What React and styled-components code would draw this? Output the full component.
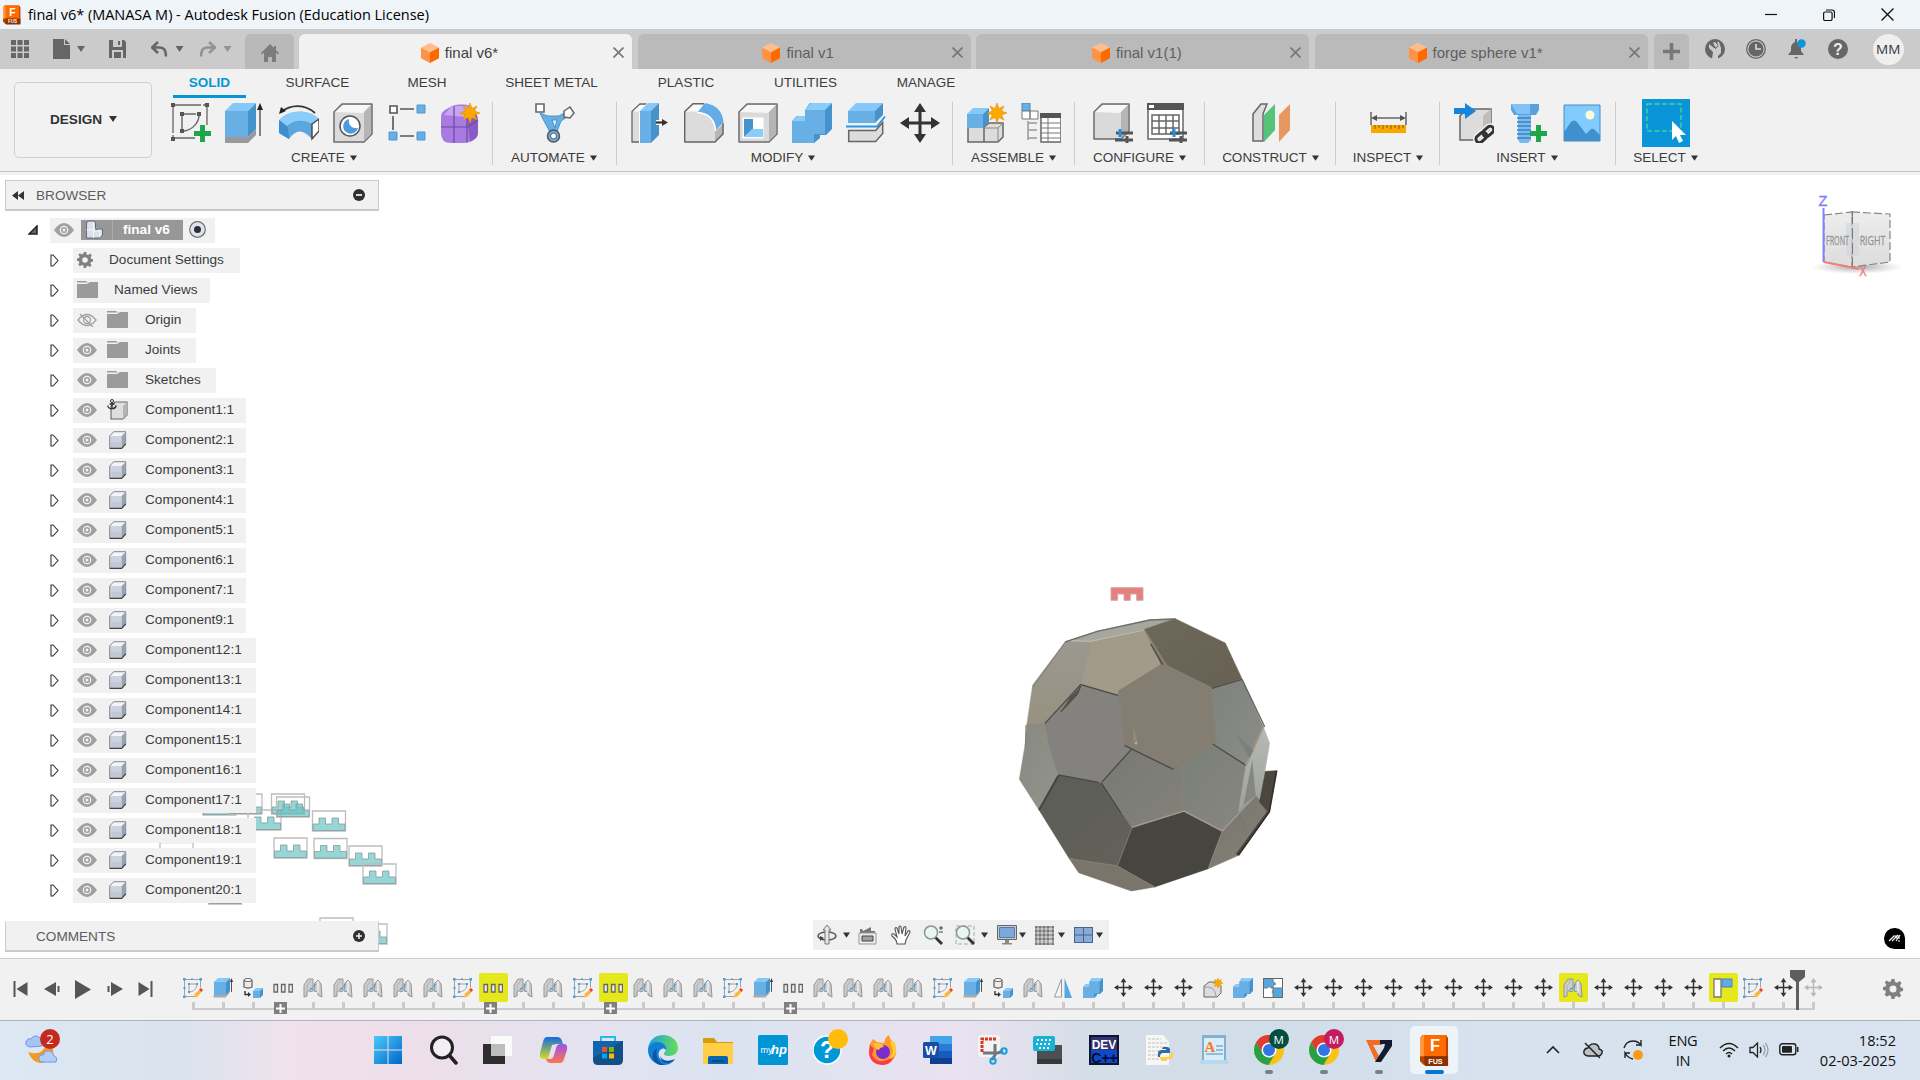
import React from "react";
import styled, { createGlobalStyle } from "styled-components";

const ui = '"Liberation Sans", Arial, sans-serif';
const win = '"Open Sans", "Noto Sans", sans-serif';

const GlobalStyle = createGlobalStyle`
  *, *::before, *::after { box-sizing: border-box; }
  body { margin: 0; overflow: hidden; background: #fff; }
  svg { display: block; flex: none; }
`;

const Screen = styled.div`
  width: 1920px; height: 1080px; display: flex; flex-direction: column;
  font-family: ${ui}; font-size: 13.6px; color: #3c3c3c; overflow: hidden; background: #fff;
`;

/* ---------- title bar ---------- */
const TitleBar = styled.header`
  height: 29px; flex: none; display: flex; align-items: center; justify-content: space-between;
  background: #eff4f9; padding: 0 26px 0 3px;
`;
const TitleLabel = styled.div`
  display: flex; align-items: center; gap: 7px; font-family: ${win};
  font-size: 14.5px; color: #000; white-space: nowrap; letter-spacing: -0.03px;
`;
const WindowButtons = styled.div`display: flex; align-items: center; gap: 46px;`;

/* ---------- document tabs ---------- */
const TabStrip = styled.div`
  height: 40px; flex: none; display: flex; align-items: flex-end; background: #cbcbcb;
`;
const QuickTools = styled.div`
  width: 245px; height: 40px; display: flex; align-items: center; padding-left: 11px;
`;
const QuickItem = styled.div`
  display: flex; align-items: center; gap: 7px; margin-right: ${p => p.$after}px; opacity: ${p => (p.$dim ? 0.55 : 1)};
`;
const HomeTab = styled.div`
  width: 49px; height: 35px; border-radius: 5px 5px 0 0; background: #b9b9b9; margin-right: 5px;
  display: flex; justify-content: center; align-items: center; padding-top: 3px;
`;
const DocTab = styled.div`
  width: 333px; height: 35px; margin-right: 5.7px; border-radius: 6px 6px 0 0; display: flex; align-items: center;
  background: ${p => (p.$active ? "#f1f1f1" : "#bababa")}; color: ${p => (p.$active ? "#3f3f3f" : "#5f5f5f")};
  font-size: 15px; padding-right: 8px; padding-top: 2px;
`;
const DocName = styled.div`
  flex: 1; display: flex; align-items: center; justify-content: center; gap: 6px; padding-left: 7px;
`;
const NewTab = styled.div`
  width: 35px; height: 35px; border-radius: 5px 5px 0 0; background: #bababa; display: flex; align-items: center; justify-content: center;
`;
const AccountTools = styled.div`
  flex: 1; height: 40px; display: flex; align-items: center; padding-left: 16px; gap: 21px;
`;
const Avatar = styled.div`
  width: 31px; height: 31px; margin-left: 4px; border-radius: 50%; background: #efefef; color: #334;
  font: 13.5px ${win}; display: flex; align-items: center; justify-content: center;
`;

/* ---------- ribbon ---------- */
const Ribbon = styled.section`
  height: 106px; flex: none; background: #f1f1f1; display: flex; position: relative;
  &::after { content: ""; position: absolute; left: 0; right: 0; top: 102px; height: 1px; background: #c4c4c4; }
`;
const Workspace = styled.button`
  width: 138px; height: 76px; margin: 13px 6px 0 14px; border: 1px solid #cfcfcf; border-radius: 5px; background: #f2f2f2;
  font: bold 13.6px ${ui}; color: #333; display: flex; align-items: center; justify-content: center; gap: 7px; padding: 0 0 2px 1px;
`;
const RibbonBody = styled.div`flex: 1; display: flex; flex-direction: column;`;
const RibbonTabs = styled.nav`height: 30px; display: flex; padding-left: 15px;`;
const RibbonTab = styled.div`
  height: 29px; width: ${p => p.$w}px; margin-right: ${p => p.$after}px; padding-top: 6px; font-size: 13.5px; white-space: nowrap;
  text-align: center; font-weight: ${p => (p.$active ? "bold" : "normal")}; color: ${p => (p.$active ? "#0696d7" : "#3c3c3c")};
  border-bottom: 3px solid ${p => (p.$active ? "#0696d7" : "transparent")};
`;
const Groups = styled.div`display: flex; height: 72px;`;
const Group = styled.div`width: ${p => p.$w}px; display: flex; flex-direction: column; align-items: center; position: relative;
  &::after { content: ""; position: absolute; right: 0; top: 3px; height: 63px; width: ${p => (p.$last ? 0 : 1)}px; background: #cdcdcd; }
`;
const GroupIcons = styled.div`height: 48px; display: flex; align-items: center; gap: 14px;`;
const GroupLabel = styled.div`
  height: 21px; display: flex; align-items: center; gap: 5px; font-size: 13.5px; white-space: nowrap; padding-right: ${p => p.$nudge || 0}px;
`;
const SelectTile = styled.div`width: 48px; height: 48px; background: #0a95d9; display: flex; align-items: center; justify-content: center;`;

/* ---------- viewport ---------- */
const Viewport = styled.main`flex: 1; min-height: 0; position: relative; background: #fff; display: flex;`;
const Markers = styled.svg`position: absolute; left: 0; top: 0;`;
const Model = styled.svg`position: absolute; left: 990px; top: 395px;`;
const ViewCube = styled.svg`position: absolute; left: 1800px; top: 15px;`;
const NavBar = styled.div`
  position: absolute; left: 813px; top: 745px; width: 296px; height: 30px; background: #f0f0f0;
  display: flex; align-items: center; padding-left: 4px;
`;
const NavItem = styled.div`width: ${p => p.$w}px; display: flex; align-items: center; gap: ${p => p.$gap || 4}px;`;
const Assistant = styled.svg`position: absolute; left: 1884px; top: 753px;`;

const Sidebar = styled.aside`
  position: relative; width: 384px; padding: 5px 5px 6px; display: flex; flex-direction: column;
`;
const PanelHead = styled.div`
  width: 374px; height: 31px; flex: none; display: flex; align-items: center; background: #f1f1f1; color: #5e5e5e;
  border: 1px solid #c9c9c9; border-bottom-width: 2px; padding: 0 13px 0 6px; font-size: 13.6px;
  border-top-color: ${p => (p.$flatTop ? "#f1f1f1" : "#c9c9c9")};
`;
const HeadIcon = styled.div`width: 24px;`;
const HeadText = styled.div`flex: 1;`;
const Tree = styled.div`display: flex; flex-direction: column; padding-top: 4px; flex: 1;`;
const TreeRow = styled.div`height: 30px; flex: none; display: flex; align-items: center; padding-left: ${p => (p.$root ? 23 : 45)}px;`;
const Arrow = styled.div`width: ${p => p.$w}px;`;
const RowBody = styled.div`
  height: 25px; width: ${p => p.$w}px; background: #f1f1f1; display: flex; align-items: center; white-space: nowrap; padding: 0 0 1px 4px;
`;
const IconCell = styled.div`width: ${p => p.$w}px; display: flex; align-items: center;`;
const RootName = styled.div`
  height: 20px; width: 102px; margin-left: 7px; margin-right: 6px; background: #979797; color: #fff; font-weight: bold; display: flex; align-items: center;
`;
const RootIcon = styled.div`width: 32px; height: 20px; padding-left: 4px; border-right: 1px solid #aaa;`;
const RootText = styled.span`padding-left: 10px;`;

/* ---------- timeline ---------- */
const Timeline = styled.section`
  height: 63px; flex: none; background: #f1f1f1; border-top: 1px solid #cfcfcf; border-bottom: 1px solid #b0b2bd;
  display: flex; position: relative;
`;
const Playback = styled.div`width: 178px; height: 62px; padding: 0 25px 2px 13px; display: flex; align-items: center; justify-content: space-between;`;
const Track = styled.div`
  display: flex; padding-top: 14px; height: 62px;
  background: linear-gradient(#cbcbcb, #cbcbcb) no-repeat 14px 49px / 1623px 2px;
`;
const Feature = styled.div`width: 30px; height: 38px; flex: none; display: flex; flex-direction: column; align-items: center;`;
const FeatureIcon = styled.div`
  width: 29px; height: 29px; flex: none; border-radius: 2px; display: flex; align-items: center; justify-content: center;
  background: ${p => (p.$hot ? "#e6e81e" : "transparent")};
  opacity: ${p => (p.$dim ? 0.3 : 1)};
`;
const Tick = styled.div`width: 3px; height: 7px; background: #cbcbcb;`;
const Expand = styled.div`
  width: 13px; height: 12px; flex: none; margin-left: -5px; background: #7f7f7f; display: flex; align-items: center; justify-content: center;
`;
const Playhead = styled.svg`position: absolute; left: 1790px; top: 11px;`;
const TimelineEnd = styled.div`flex: 1; display: flex; align-items: center; justify-content: flex-end; padding-right: 17px; height: 60px;`;

/* ---------- taskbar ---------- */
const Taskbar = styled.footer`
  height: 59px; flex: none; display: flex; align-items: center; font-family: ${win}; color: #111;
  background: linear-gradient(90deg, #dce8f4 0, #dbe3ed 180px, #f0e2ed 290px, #ecdfe9 430px, #e3e3f1 600px, #dbe3f0 730px, #eae2f0 960px, #d4dee7 1090px, #d1dde8 1260px, #d5e2ed 1440px, #dae4f1 1920px);
`;
const Weather = styled.div`width: 360px; padding-left: 24px; padding-bottom: 10px;`;
const AppIcons = styled.div`display: flex; height: 59px; align-items: center;`;
const AppSlot = styled.div`
  width: 55.08px; height: 59px; display: flex; flex-direction: column; align-items: center; padding-top: 5px;
`;
const AppTile = styled.div`
  width: 48px; height: 48px; border-radius: 5px; display: flex; flex-direction: column; align-items: center; justify-content: center; position: relative;
  background: ${p => (p.$active ? "rgba(255,255,255,.6)" : "transparent")};
`;
const Running = styled.i`
  position: absolute; bottom: 0; width: ${p => (p.$active ? 19 : 8)}px; height: 4px; border-radius: 2px;
  background: ${p => (p.$active ? "#0078d4" : "#7b7f86")};
`;
const Badge = styled.b`
  position: absolute; top: 3px; right: 4px; width: 20px; height: 20px; border-radius: 50%; color: #fff; background: ${p => p.$bg};
  font: 11.5px ${win}; display: flex; align-items: center; justify-content: center;
`;
const Tray = styled.div`flex: 1; display: flex; align-items: center; justify-content: flex-end; padding: 0 24px 2px 0; font-size: 14.6px; line-height: 20px;`;
const TrayItem = styled.div`margin-left: ${p => p.$ml}px;`;
const Language = styled.div`margin-left: 24px; width: 30px; text-align: center; letter-spacing: -0.3px;`;
const Clock = styled.div`margin-left: 18px; width: 79px; text-align: right; white-space: nowrap; letter-spacing: 0;`;

/* ---------- icons ---------- */
const Svg = ({ w = 20, h = w, vb, children }) => (
  <svg width={w} height={h} viewBox={vb || `0 0 ${w} ${h}`} fill="none">{children}</svg>
);
const Caret = ({ w = 7, h = 6, c = "#333" }) => <Svg w={w} h={h} vb="0 0 8 6"><path d="M0 0h8L4 6z" fill={c} /></Svg>;
const DocCube = () => (
  <Svg w={18} h={20}><path d="M9 0l9 4.5-9 4.7-9-4.7z" fill="#ffbd8b" /><path d="M0 4.5l9 4.7V20l-9-4.8z" fill="#ff9345" /><path d="M18 4.5L9 9.2V20l9-4.8z" fill="#ff6a00" /></Svg>
);
const Close = () => <Svg w={11}><path d="M.5.5l10 10M10.5.5l-10 10" stroke="#777" strokeWidth="1.7" /></Svg>;
const FusionLogo = ({ w = 18, h = 20 }) => (
  <Svg w={w} h={h} vb="0 0 30 32">
    <path d="M3 0h24l2 3v28H4L0 27V3z" fill="#b84300" /><path d="M0 3l3-3h24v22H0z" fill="#ff6b00" /><path d="M0 3l4-3v22H0z" fill="#ff9a43" />
    <path d="M4 22h25v10H5z" fill="#8c3100" />
    <text x="15.5" y="17" textAnchor="middle" fontFamily="Liberation Sans" fontWeight="bold" fontSize="17" fill="#fff">F</text>
    <text x="16" y="30" textAnchor="middle" fontFamily="Liberation Sans" fontWeight="bold" fontSize="7.5" fill="#fff">FUS</text>
  </Svg>
);

const Box = ({ x = 0, y = 0, w = 24, h = 30, d = 8, front = "#68afe6", top = "#85c9fb", side = "#4693cc" }) => (
  <g>
    <path d={`M${x} ${y + d}l${d} ${-d}h${w}l${-d} ${d}z`} fill={top} />
    <path d={`M${x} ${y + d}h${w}v${h}h${-w}z`} fill={front} />
    <path d={`M${x + w} ${y + d}l${d} ${-d}v${h}l${-d} ${d}z`} fill={side} />
  </g>
);
const GrayBox = ({ x = 1, y = 1, w = 30, h = 30, d = 8 }) => (
  <g strokeLinejoin="round">
    <path d={`M${x} ${y + d}l${d} ${-d}h${w}v${h}l${-d} ${d}h${-w}z`} fill="#dadada" stroke="#6c6c6c" strokeWidth="1.5" />
    <path d={`M${x + 1} ${y + d}l${d} ${-d + 1}h${w - 2}l${-d} ${d}z`} fill="#f7f7f7" />
    <path d={`M${x + w} ${y + d}l${d - 1} ${-d + 1}v${h - 1}l${-d + 1} ${d - 1}z`} fill="#b5b5b5" />
  </g>
);
const Star = ({ x, y, r = 9 }) => {
  let p = "";
  for (let i = 0; i < 16; i++) {
    const a = (i * Math.PI) / 8, q = i % 2 ? r * 0.5 : r;
    p += `${i ? "L" : "M"}${(x + q * Math.sin(a)).toFixed(2)} ${(y - q * Math.cos(a)).toFixed(2)}`;
  }
  return <path d={p + "z"} fill="#fba800" stroke="#e08a00" strokeWidth=".5" />;
};
const Plus = ({ x, y, s = 17 }) => <path d={`M${x + s / 2} ${y}v${s}M${x} ${y + s / 2}h${s}`} stroke="#1ea64b" strokeWidth={s * 0.29} />;
const MoveArrows = () => (
  <g><path d="M20 6v28M6 20h28" stroke="#333" strokeWidth="3" /><path d="M20 0l6 9H14zM20 40l6-9H14zM0 20l9-6v12zM40 20l-9-6v12z" fill="#333" /></g>
);
const Combine = () => (
  <g><path d="M13 7l5-7h22v26l-6 6H28v3l-6 5H0V18l5-5h8z" fill="#4693cc" /><path d="M13 7h20v24H22v9H0V18h13z" fill="#68afe6" /><path d="M13 7l6-7h21l-7 7zM0 18l6-5h7v5z" fill="#8accfa" /></g>
);

const R = ({ children }) => <Svg w={40} vb="0 0 40 40">{children}</Svg>;
const ribbonIcons = {
  sketch: <R><path d="M4 2h30M2 4v30M36 4v18M4 35h20" stroke="#666" strokeWidth="1.3" strokeDasharray="26 2" /><path d="M11 12v15M12 11h13M28 12c0 8-7 15-15 16" stroke="#666" strokeWidth="1.4" /><path d="M0 0h4v4H0zM34 0h4v4h-4zM0 34h4v4H0zM9 9h4v4H9zM26 9h4v4h-4zM9 26h4v4H9z" fill="#555" /><Plus x={23} y={22} s={17} /></R>,
  extrude: <R><path d="M0 34h23l8-8v6l-8 8H0z" fill="#999" /><Box x={0} y={0} w={23} h={26} /><path d="M35 5v28" stroke="#444" strokeWidth="1.3" /><path d="M35 0l3 7h-6z" fill="#222" /></R>,
  revolve: <R><path d="M2 9C12 1 26 1 36 10" stroke="#333" strokeWidth="1.8" /><path d="M0 11l2-7 5 4z" fill="#222" /><path d="M0 18C10 6 29 6 40 16L33 36C24 26 17 26 10 36L0 30z" fill="#5ca6df" /><path d="M0 17C10 6 29 6 40 16l-7 5C24 16 14 17 8 23z" fill="#8accfa" /><path d="M0 17l9 7 1 12-10-6z" fill="#3f8dcc" /><path d="M33 21l7-5v12l-7 8z" fill="#fff" stroke="#444" strokeWidth="1.4" /></R>,
  hole: <R><GrayBox /><circle cx="17" cy="23" r="10" fill="#fff" stroke="#555" strokeWidth="1.5" /><path d="M16 16a7.5 7.5 0 1 0 9 9c-6 1-10-3-9-9z" fill="#4b9be0" /></R>,
  pattern: <R><path d="M13 6h14M6 13v14M13 33h14" stroke="#555" strokeWidth="1.6" /><path d="M3 3h7v7H3z" stroke="#555" strokeWidth="1.6" fill="#fff" /><path d="M30 2h8v8h-8zM2 29h8v8H2zM30 29h8v8h-8z" fill="#68afe6" stroke="#4d98d3" /></R>,
  form: <R><path d="M0 14Q0 9 4 7l7-4q3-1.500 7-1.500h5q8 0 12 8 2 4 2 9v10q0 6-5 8l-3 2q-2 1.500-6 1.500H10Q0 40 0 30z" fill="#a77be2" /><path d="M3 12L11 3h15l6 5-8 6z" fill="#c9a4f5" /><path d="M26 14l8-6q3 6 3 12v12q-2 5-8 7z" fill="#7f4bb7" opacity=".7" /><path d="M13 3v37M0 24h27l10-7M26 14v25" stroke="#6e4a9e" strokeWidth="1.200" /><Star x={29} y={10} r={10} /></R>,
  automate: <R><path d="M5 10c8 3 7 3 10 3h9l7-4 1 5-6 4-5 13h-5L9 18z" fill="#68afe6" stroke="#4693cc" /><path d="M17 17h5l-2 8z" fill="#f1f1f1" stroke="#4693cc" /><circle cx="18.500" cy="33" r="6" fill="#68afe6" stroke="#555" strokeWidth="1.500" /><circle cx="18.500" cy="33" r="3" fill="#fff" stroke="#555" /><path d="M1 1h8v8H1z" fill="#fff" stroke="#666" strokeWidth="1.600" /><path d="M29 8l6-4 4 6-4 5-6-1z" fill="#fff" stroke="#666" strokeWidth="1.500" /></R>,
  press: <R><path d="M2 8.500l8-7.500h7l-7 8v30H2z" fill="#ddd" stroke="#666" strokeWidth="1.300" /><path d="M3 8.500l7-6.500h6l-6 6.500z" fill="#fafafa" /><path d="M9 9v31l1 0V8l9-8h-2z" fill="#fff" /><Box x={10} y={0} w={11} h={32} d={8} /><path d="M26 19.500h8" stroke="#fff" strokeWidth="5" /><path d="M26 19.500h8" stroke="#333" strokeWidth="2.200" /><path d="M32 16l6 3.500-6 3.500z" fill="#333" /></R>,
  fillet: <R><path d="M.7 8.500L9 1h11l-5 8q15 1 16 17l8-6v11l-8 8.500H.7z" fill="#dcdcdc" /><path d="M2 8.500l8-7h9l-5 7z" fill="#fafafa" /><path d="M31 29l8-8v10l-8 8z" fill="#b5b5b5" /><path d="M20 .7H9L.7 8.500V39H31l8-8V20" stroke="#666" strokeWidth="1.500" strokeLinejoin="round" /><path d="M14 9L21 0q17 3 18.500 19L32 27Q30 11 14 9z" fill="#63ace6" /><path d="M13 9.500q17 1 18.500 18" stroke="#fff" strokeWidth="1.600" /></R>,
  shell: <R><GrayBox /><path d="M4.500 14.500h21v21h-21z" fill="#fff" /><path d="M6 16h9v11l-9 7z" fill="#4693cc" /><path d="M14 26h11v8H6z" fill="#8accfa" /></R>,
  combine: <R><Combine /></R>,
  split: <R><Box x={2} y={0} w={27} h={12} d={8} /><path d="M0 23.500h31l8-10" stroke="#2795e6" strokeWidth="1.800" /><path d="M2.700 27.500h27l7-8v11l-7 8h-27z" fill="#dcdcdc" stroke="#666" strokeWidth="1.500" /></R>,
  move: <R><MoveArrows /></R>,
  component: <R><path d="M1 24h16v15H1zM17 24l5-4h14v14l-5 5H17z" fill="#dcdcdc" stroke="#666" strokeWidth="1.500" /><path d="M17 25h14v14M31 25l5-5" stroke="#888" /><Box x={0} y={5} w={16} h={14} d={6} /><Star x={30} y={10} r={10} /></R>,
  joints: <R><path d="M1 0h8v8H1z" fill="#68afe6" stroke="#4b88b6" /><path d="M1 8h8v8H1zM9 8h8v8H9z" fill="#fff" stroke="#777" /><path d="M7 18v19M7 20h9M7 27h9M7 35h9" stroke="#999" strokeWidth="1.500" /><path d="M20 11h20v28H20z" fill="#fff" stroke="#666" strokeWidth="1.500" /><path d="M19 10h21v5H19z" fill="#555" /><path d="M20 20h20M20 25h20M20 30h20M20 35h20M27 15v24" stroke="#777" /></R>,
  configBox: <R><GrayBox w={27} h={27} /><path d="M23 30h17M22 37h18" stroke="#555" strokeWidth="3" /><path d="M27 26v8" stroke="#1e90e8" strokeWidth="3" /><path d="M34 33v8" stroke="#555" strokeWidth="3" /></R>,
  configTable: <R><path d="M1 1h35v35H1z" fill="#fff" stroke="#666" strokeWidth="1.500" /><path d="M0 0h37v7H0z" fill="#555" /><path d="M2 2h5v3H2z" fill="#fff" /><path d="M5 12h27v19H5zM5 18h27M5 25h27M12 12v19M19 12v19M26 12v19" stroke="#666" strokeWidth="1.500" /><path d="M23 30h17M22 37h18" stroke="#555" strokeWidth="3" /><path d="M27 26v8" stroke="#1e90e8" strokeWidth="3" /><path d="M34 33v8" stroke="#555" strokeWidth="3" /></R>,
  construct: <R><path d="M2 11l8-10h6L12 11v27H2z" fill="#ddd" stroke="#666" strokeWidth="1.500" /><path d="M13 12L24 1v26L13 39z" fill="#55c47a" /><path d="M28 12L39 1v26L28 39z" fill="#e79861" /></R>,
  inspect: <R><path d="M3 9v13M38 9v13M5 15h31" stroke="#666" strokeWidth="1.500" /><path d="M3 15l6-3v6zM38 15l-6-3v6z" fill="#555" /><path d="M3 22h35v8H3z" fill="#f9a800" /><path d="M7 22v4M11 22v3M15 22v4M19 22v3M23 22v4M27 22v3M31 22v4M35 22v3" stroke="#9d6700" strokeWidth="1.200" /></R>,
  insert: <R><path d="M6 13l6-7h25v24l-7 7H6z" fill="#dcdcdc" stroke="#666" strokeWidth="1.500" /><path d="M29 13l8-7v22l-8 8z" fill="#bdbdbd" /><path d="M0 5h11V0l11 8-11 8v-5H0z" fill="#1784dc" /><g stroke="#f1f1f1" strokeWidth="6"><rect x="21" y="31" width="12" height="7" rx="3.500" transform="rotate(-42 27 34)" /><rect x="28" y="25" width="12" height="7" rx="3.500" transform="rotate(-42 34 28)" /></g><g stroke="#333" strokeWidth="3"><rect x="21" y="31" width="12" height="7" rx="3.500" transform="rotate(-42 27 34)" /><rect x="28" y="25" width="12" height="7" rx="3.500" transform="rotate(-42 34 28)" /></g></R>,
  bolt: <R><path d="M10 10h13v27l-3 3h-8l-2-3z" fill="#79baf0" /><path d="M9 15h14M9 19h14M9 23h14M9 27h14M9 31h14M9 35h14" stroke="#3d82bc" strokeWidth="1.500" /><path d="M3 1h28v6l-3 5H6L3 7z" fill="#5ba2dc" /><path d="M3 1h19v10H9z" fill="#82c1f4" /><Plus x={22} y={22} s={17} /></R>,
  picture: <R><path d="M2 2h36v36H2z" fill="#82cbff" stroke="#3d90ca" /><path d="M2 29l7-10q3-3 6 0l9 12 5-5q2-1 4 1l5 5v6H2z" fill="#3f90cc" /><circle cx="28" cy="12" r="4.500" fill="#fffbd2" /></R>,
};

/* timeline glyphs drawn on a 20px grid */
const featureIcons = {
  sketch: <Svg w={20}><path d="M1.500 1.500h16M1.500 1.500v16M17.500 1.500v8M1.500 18.500h11" stroke="#999" strokeWidth=".9" /><path d="M6 6h8c0 4-3 8-8 8z" stroke="#999" strokeWidth=".9" /><path d="M0 0h2.500v2.500H0zM8 .5h2V2H8zM16.500 0H19v2.500h-2.500zM.5 9h2v2h-2zM0 17.500h2.500V20H0zM5 5h2v2H5zM13 5h2v2h-2zM5 13h2v2H5z" fill="#45a0ea" /><path d="M11 19.500l1-4 5-4 2 2-4.500 5z" fill="#fcb73b" /><path d="M16 11.500l2-1.500 2 2-1.500 2z" fill="#e84234" /></Svg>,
  extrude: <Svg w={20}><path d="M.5 17h12l4-4v2l-4 4.500H.5z" fill="#aaa" /><Box w={12} h={13} d={4} x={1} /><path d="M18.500 3v11" stroke="#444" strokeWidth=".9" /><path d="M18.500 0l1.500 4h-3z" fill="#333" /></Svg>,
  copy: <Svg w={20}><path d="M1 2v7q4 2 8 0V2" fill="#ececec" stroke="#666" strokeWidth="1.300" /><ellipse cx="5" cy="2" rx="4" ry="1.500" fill="#fff" stroke="#666" /><path d="M2 13v3.500h4" stroke="#333" strokeWidth="1.400" /><path d="M5 14l3 2.500L5 19z" fill="#333" /><Box x={10} y={10} w={7} h={7} d={3} /></Svg>,
  dots: <Svg w={20}><path d="M1 6.500h3.500V14H1zM8.500 6.500H12V14H8.500zM16 6.500h3.500V14H16z" fill="#eee" stroke="#666" strokeWidth="1.300" /></Svg>,
  joint: <Svg w={20}><path d="M1 19V7l4-6 5 0v12l-3 1v-2l-3 2v4z" fill="#cdcdcd" stroke="#979797" /><path d="M4 18V8l4-6" stroke="#b0b0b0" /><path d="M12 5l3-3 3 4 1 13-4-2v-3l-4-1z" fill="#cdcdcd" stroke="#929292" /><path d="M15 3v12" stroke="#eee" strokeWidth="1.500" /><path d="M7 11l3-1M11 9l1-3" stroke="#4aa3e3" strokeWidth="1.800" /></Svg>,
  mirror: <Svg w={20}><path d="M8.500 1v18H1.500z" fill="#f5f5f5" stroke="#999" /><path d="M11.500 0v20H19z" fill="#54a9e5" /></Svg>,
  combine: <Svg w={20} vb="0 0 40 40"><Combine /></Svg>,
  move: <Svg w={19} vb="0 0 40 40"><MoveArrows /></Svg>,
  fillet: <Svg w={20}><path d="M1 8l5-4h8l4 4v7l-4 4H1z" fill="#ddd" stroke="#666" /><path d="M2 9q10-1 11 9" stroke="#999" /><Star x={15} y={5} r={5} /></Svg>,
  puzzle: <Svg w={20}><path d="M0 0h20v20H0z" fill="#fff" stroke="#666" strokeWidth="2" /><path d="M1 1h9v3q3 0 3 3h-3v3H7q0-3-3 0H1zM10 10h9v9h-9v-4q-3 0 0-3z" fill="#55a5df" /><path d="M10 0v4q4 1 0 4v12M0 10h4q3-3 4 0h12" stroke="#777" /></Svg>,
  align: <Svg w={20}><path d="M1 1h7v18H1z" fill="#fff" stroke="#777" strokeWidth="1.300" /><path d="M9 1h10v8H9z" fill="#63abe5" stroke="#4683b7" /></Svg>,
};
const features = [
  "sketch", "extrude", "copy", "dots+", "joint", "joint", "joint", "joint", "joint", "sketch", "dots+!", "joint", "joint", "sketch", "dots+!",
  "joint", "joint", "joint", "sketch", "extrude", "dots+", "joint", "joint", "joint", "joint", "sketch", "extrude", "copy", "joint", "mirror",
  "combine", "move", "move", "move", "fillet", "combine", "puzzle", "move", "move", "move", "move", "move", "move", "move", "move", "move",
  "joint!", "move", "move", "move", "move", "align!", "sketch", "move", "move~",
];

const ribbonTabs = [
  ["SOLID", 73, 35], ["SURFACE", 73, 45.5], ["MESH", 55, 46], ["SHEET METAL", 102, 48.5], ["PLASTIC", 70, 43.500], ["UTILITIES", 82, 40.500], ["MANAGE", 78, 0],
];
const groups = [
  ["CREATE", 335, ["sketch", "extrude", "revolve", "hole", "pattern", "form"], 3],
  ["AUTOMATE", 124, ["automate"], 2],
  ["MODIFY", 336, ["press", "fillet", "shell", "combine", "split", "move"], 4],
  ["ASSEMBLE", 122, ["component", "joints"], 1],
  ["CONFIGURE", 130, ["configBox", "configTable"], 1],
  ["CONSTRUCT", 131, ["construct"]],
  ["INSPECT", 104, ["inspect"]],
  ["INSERT", 176, ["insert", "bolt", "picture"], 2],
];

const Eye = ({ off }) => off ? (
  <Svg w={20} h={14}><path d="M1 7q9-11 18 0-9 11-18 0z" stroke="#a0a0a0" strokeWidth="1.300" /><circle cx="10" cy="7" r="3.500" stroke="#a0a0a0" strokeWidth="1.300" /><path d="M3 1l13 13" stroke="#a0a0a0" strokeWidth="1.300" /></Svg>
) : (
  <Svg w={20} h={14}><path d="M0 7q10-14 20 0-10 14-20 0z" fill="#a0a0a0" /><circle cx="10" cy="7" r="3.700" stroke="#f3f3f3" strokeWidth="1.200" /><circle cx="10" cy="7" r="1.500" fill="#f3f3f3" /></Svg>
);
const Folder = () => <Svg w={21} h={17}><path d="M0 0h9l2 1.500H0zM0 3h10l3-2h8v16H0z" fill="#9b9b9b" /></Svg>;
const gearPath = "M8.500 0h3l.5 3 2 .8L16.500 2l2 2.100L17 6.500l.8 2 2.200.5v3l-2.500.5-.8 1.800 1.500 2.200-2.100 2.100-2.300-1.500-1.900.8-.5 2.100h-3L8 17l-2-.8-2.300 1.500-2.100-2.100L3 13.300l-.6-1.800L0 11V8l2.500-.5.8-1.900L1.700 3.500l2-2L6 3l2-.8zM10 6.500a3.500 3.500 0 1 0 .01 7 3.500 3.500 0 1 0-.01-7z";
const Gear = ({ w = 16, c = "#808080" }) => <Svg w={w} vb="0 0 20 20"><path fillRule="evenodd" d={gearPath} fill={c} /></Svg>;
const Part = () => (
  <Svg w={18} h={18}><path d="M.7 5l4-4.300h12v12.300l-4 4.300h-12z" fill="#ccd2de" stroke="#85888f" strokeWidth="1" /><path d="M1.500 5l3.500-3.600h11L12.500 5z" fill="#f4f5f8" /><path d="M12.700 5l3.600-3.600V13l-3.600 3.800z" fill="#9aa2b2" /><path d="M2 11h10v5H2z" fill="#b8bfce" opacity=".5" /><path d="M.7 17.300h12l4-4.300" stroke="#444" strokeWidth="1.200" /></Svg>
);
const Anchored = () => (
  <Svg w={22} h={21}><path d="M4 7l4-4h12v13l-4 4H4z" fill="#dedede" stroke="#666" strokeWidth="1.100" /><path d="M16 7l4-4v13l-4 4z" fill="#b5b5b5" /><circle cx="5" cy="2" r="1.500" fill="#fff" stroke="#333" /><path d="M5 3v6M2.500 5h5M.8 6.500q.5 3.500 4.200 3.200 3.500.2 4.200-3.200" stroke="#333" strokeWidth="1.300" /></Svg>
);
const Assembly = () => <Svg w={19} h={19}><path d="M1.500 3l2-2h6l1 2v7l3-1h4v6l-3 3h-13z" fill="#dbe1ec" stroke="#626a78" /><path d="M1.500 10h7v8M8.500 10l2-1M8.500 3v7M9 11h6v6" stroke="#f4f6fa" /></Svg>;
const Collapsed = () => <Svg w={9} h={13}><path d="M1 1h2l5 5.500-5 5.500H1z" fill="#fff" stroke="#333" strokeWidth="1.100" /></Svg>;

const rows = [
  ["gear", "Document Settings", 167], ["folder", "Named Views", 137],
  ["origin", "Origin", 123], ["sub", "Joints", 123], ["sub", "Sketches", 143],
  ["anchor", "Component1:1", 173],
  ...[2, 3, 4, 5, 6, 7, 9, 12, 13, 14, 15, 16, 17, 18, 19, 20].map(n => ["part", `Component${n}:1`, n > 9 ? 183 : 173]),
];

function Row({ kind, label, w }) {
  const top = kind === "gear" || kind === "folder";
  return (
    <TreeRow>
      <Arrow $w={23}><Collapsed /></Arrow>
      <RowBody $w={w}>
        {top ? (
          <IconCell $w={kind === "gear" ? 32 : 37}>{kind === "gear" ? <Gear /> : <Folder />}</IconCell>
        ) : (
          <>
            <IconCell $w={kind === "anchor" ? 30 : kind === "part" ? 32 : 30}><Eye off={kind === "origin"} /></IconCell>
            <IconCell $w={kind === "anchor" ? 38 : kind === "part" ? 36 : 38}>{kind === "part" ? <Part /> : kind === "anchor" ? <Anchored /> : <Folder />}</IconCell>
          </>
        )}
        {label}
      </RowBody>
    </TreeRow>
  );
}

const markers = [[203, 620], [229, 619], [248, 635], [271.5, 619], [276.5, 622], [312.5, 636], [274, 663], [314, 663.5], [349, 671], [363, 689], [160, 667.5], [208.5, 709], [320, 743], [354, 749]];
const JointMarker = ({ x, y }) => (
  <g transform={`translate(${x} ${y})`}>
    <path d="M0 0h33v20H0z" fill="none" stroke="#bdbdbd" strokeWidth="1.300" />
    <path d="M.5 19.500V13h6V7h6.500v6h6.500V7H26v6h6.500v6.500z" fill="#66c2c2" fillOpacity=".68" stroke="#8b9a9a" strokeWidth=".8" />
  </g>
);

const faces = [
  ["225,216 322,183 480,149 556,146 463,180 302,217", "#a6a79f"],
  ["302,215 463,178 512,284 384,362 384,376 272,342", "url(#beige)"],
  ["463,178 556,146 706,219 756,326 665,354 526,284", "url(#umber)"],
  ["225,216 302,215 272,342 165,462 110,467 128,345", "url(#tan)"],
  ["110,465 165,460 206,615 147,720 88,628 106,520", "url(#leftLow)"],
  ["272,342 384,376 403,526 424,538 335,640 205,615 180,540 165,460", "#84827e"],
  ["665,354 756,326 820,470 768,586 668,522 680,514", "url(#rightUp)"],
  ["424,536 550,597 580,578 580,723 426,773 335,637", "url(#mid)"],
  ["668,520 768,586 750,720 697,785 580,723 578,578", "url(#rightHex)"],
  ["512,284 526,284 663,352 680,514 580,578 550,597 403,526 386,364", "#837d72"],
  ["205,615 325,637 335,640 426,773 382,888 238,866 147,720", "url(#slate)"],
  ["426,773 580,723 697,783 655,896 494,951 382,888", "#474540"],
  ["238,866 382,888 494,951 424,963 266,908", "#79756a"],
  ["820,470 839,520 825,602 808,690 797,676 745,725 768,586", "url(#pale)"],
  ["697,783 797,676 838,725 746,856 655,896", "url(#lowRight)"],
  ["826,604 860,602 838,725 746,856 738,852 832,724 808,695", "#4b473f"],
];
const Grad = ({ id, a, b, x2 = 1, y2 = 1 }) => <linearGradient id={id} x1="0" y1="0" x2={x2} y2={y2}><stop stopColor={a} /><stop offset="1" stopColor={b} /></linearGradient>;

const Badged = ({ children, bg, label }) => <>{children}<Badge $bg={bg}>{label}</Badge></>;
const Chrome = () => (
  <Svg w={30} vb="0 0 30 30"><circle cx="15" cy="15" r="15" fill="#fbc116" /><path d="M2 7.500A15 15 0 0 1 28 7.500L15 9 8.500 18.500z" fill="#e33b2e" /><path d="M2 7.500a15 15 0 0 0 12.500 22.400L21 19 9 18.500z" fill="#26a148" /><circle cx="15" cy="15" r="7.500" fill="#fff" /><circle cx="15" cy="15" r="6" fill="#3175e4" /></Svg>
);
const A = ({ children }) => <Svg w={30} vb="0 0 30 30">{children}</Svg>;
const t = { textAnchor: "middle", fontFamily: "Liberation Sans", fontWeight: "bold" };
const apps = [
  { el: <A><defs><Grad id="wn" a="#4cc9fa" b="#0067c8" /></defs><path d="M1 1h13.500v13.500H1zM15.500 1H29v13.500H15.500zM1 15.500h13.500V29H1zM15.500 15.500H29V29H15.500z" fill="url(#wn)" /></A> },
  { el: <A><circle cx="14" cy="12.500" r="10.500" fill="#f1eef4" stroke="#222" strokeWidth="3" /><path d="M21.500 20.500l6.500 7.500" stroke="#222" strokeWidth="3.500" strokeLinecap="round" /></A> },
  { el: <A><path d="M0 9h22v20H0z" fill="#2e2e2e" /><path d="M8 1h21v20H8z" fill="#fafafa" /><path d="M8 9h14v12H8z" fill="#bdbdbd" /></A> },
  { el: <A><defs><Grad id="cp1" a="#116be1" b="#d8db22" x2={0} /><Grad id="cp2" a="#9b53eb" b="#ff754d" x2={0} /></defs><path d="M9 2h10q4 0 5 4l1 3h-5q-3 0-4 4l-2 7q-1 4-5 4H6q-5 0-4-6l3-11q1-5 4-5z" fill="url(#cp1)" /><path d="M22 28H13q-4 0-5-4h4q3 0 4-4l2-7q1-4 5-4h3q4 0 3 6l-3 9q-1 4-4 4z" fill="url(#cp2)" /><path d="M14 10l5-1-5 13-4 2z" fill="#e7e0f5" /></A> },
  { el: <A><path d="M8 7V2h14v5" stroke="#23bcef" strokeWidth="2" /><path d="M0 6h30v19q0 5-5 5H5q-5 0-5-5z" fill="#124f87" /><path d="M0 6h30L0 23z" fill="#1263ad" /><path d="M9 12h5v5H9z" fill="#f25022" /><path d="M16 12h5v5h-5z" fill="#7fba00" /><path d="M9 18.500h5v5H9z" fill="#00a4ef" /><path d="M16 18.500h5v5h-5z" fill="#ffb900" /></A> },
  { el: <A><defs><Grad id="ed" a="#1ba0e6" b="#68dd55" y2={0} /></defs><path d="M0 15C0 6 7 0 15 0c9 0 15 6 15 13 0 5-4 8-9 8-3 0-5-1-5-2 0-2 2-2 2-5S14 8 9 9 0 15 0 15z" fill="url(#ed)" /><path d="M0 15c1-6 6-8 9-8 7 0 10 5 9 8-3-4-9 0-7 7 2 5 10 6 16 2-3 5-8 6-12 6C6 30 0 23 0 15z" fill="#117ed5" /><path d="M9 13c-2 6 0 15 8 17-3 1-6 0-9-2-6-5-3-12 1-15zM12 21c2 5 9 6 15 3-6 7-14 4-15-3z" fill="#0b55a2" /></A> },
  { el: <A><path d="M0 3h11l3 4h16v21H0z" fill="#d99a0c" /><path d="M0 8h30v19q0 2-2 2H2q-2 0-2-2z" fill="#ffcf48" /><path d="M5 29v-6q0-2 2-2h16q2 0 2 2v6z" fill="#0867b2" /><path d="M9 25h12v2H9z" fill="#084a83" /></A> },
  { el: <A><rect width="30" height="30" rx="1.500" fill="#0096d6" /><text x="8.500" y="18" {...t} fontWeight="normal" fontSize="9" fill="#fff">my</text><text x="21" y="19" {...t} fontStyle="italic" fontSize="13" fill="#fff">hp</text></A> },
  { el: <Badged bg="#ffbd0a" label=""><A><circle cx="14" cy="15" r="14" fill="#0097d9" stroke="#fff" strokeWidth="1.500" /><text x="14" y="23" {...t} fontSize="23" fill="#fff">?</text></A></Badged> },
  { el: <A><path d="M2 9L5 4l4 3 7 1q1-6 5-8 1 5 5 8 3 5 2 11-3 10-13 11Q3 29 1 18z" fill="#ff9a26" /><path d="M2 9q1 3 4 4l-2 7q4 7 11 6 9-1 11-9-1 13-12 13Q2 29 1 18z" fill="#fa3851" /><circle cx="15" cy="17" r="7" fill="#7b2bd2" /><path d="M5 8l5 0q4 0 6 4-4 0-5 3-5-1-6-7z" fill="#ffbd37" /><path d="M22 8q6 9-1 16 8-2 7-12-1-5-4-7z" fill="#ffce3a" /></A> },
  { el: <A><path d="M7 1h22v28H7z" fill="#185abd" /><path d="M7 1h22v8H7z" fill="#43a5ee" /><path d="M7 9h22v7H7z" fill="#2a7bd3" /><path d="M7 23h22v6H7z" fill="#103f91" /><rect y="7" width="16" height="16" rx="1.500" fill="#174ca7" /><text x="8" y="19.500" {...t} fontSize="12.500" fill="#fff">W</text></A> },
  { el: <A><rect width="22" height="22" rx="3" fill="#f3f3f3" /><path d="M4 17V4h14" stroke="#d7371e" strokeWidth="3" strokeDasharray="3 1" /><path d="M17 9v11l-3 5M5 18h15l5-2" stroke="#6e777f" strokeWidth="3" /><circle cx="15" cy="26" r="2.700" stroke="#179fdb" strokeWidth="2" /><circle cx="26" cy="16" r="2.700" stroke="#179fdb" strokeWidth="2" /></A> },
  { el: <A><path d="M4 10h25v19H4z" fill="#4c5053" /><path d="M4 24h25v5H4z" fill="#373a3c" /><rect y="1" width="22" height="15" rx="2" fill="#18b2d6" /><path d="M4 5h14M3 9h16M6 13h10" stroke="#fff" strokeWidth="2" strokeDasharray="2 2" /></A> },
  { el: <A><rect width="30" height="30" fill="#11142e" /><path d="M2 15h26v13H2z" fill="#0e4ac5" /><path d="M2 2h26v13H2z" fill="#333370" /><text x="15" y="13.500" {...t} fontSize="12" fill="#fff">DEV</text><text x="15.500" y="28" {...t} fontSize="14" fill="#030832">C++</text></A> },
  { el: <A><path d="M2 0h17l6 7v23H2z" fill="#f6f6f4" /><path d="M4 4h13M4 8h19M4 12h19M4 16h13M4 20h12M4 24h12" stroke="#c3c3c3" strokeDasharray="3 1" /><path d="M19 12h4q3 0 3 3v3h-7q-3 0-3 4h-2v-4q0-3 4-3h4v-1h-4z" fill="#2f6ea5" /><path d="M23 26h-4q-3 0-3-3v-1h7q4 0 4-5h2v4q0 3-3 3h-3z" fill="#ffd047" /></A> },
  { el: <A><path d="M3 0h24v24l2 4H1l2-4z" fill="#85afd0" /><path d="M5 3h20v22H5z" fill="#d9edf9" /><text x="11" y="17" {...t} fontFamily="Liberation Serif" fontSize="15" fill="#f47b20">A</text><path d="M17 11h7M17 15h7M7 19h17" stroke="#4d8ebb" /><path d="M2 25h26l2 4H0z" fill="#b7d8ef" /></A> },
  { el: <Badged bg="#034e41" label="M"><Chrome /></Badged>, run: true },
  { el: <Badged bg="#c41c62" label="M"><Chrome /></Badged>, run: true },
  { el: <A><path d="M2 5h18l-2 5H9l6 11-3 6z" fill="#f36c21" /><path d="M16 5h12v6L17 27h-6l9-14 1-4h-5z" fill="#111b31" /></A>, run: true },
  { el: <FusionLogo w={29} h={31} />, run: true, active: true },
];

const Search = ({ dashed }) => (
  <Svg w={20}>{dashed && <path d="M1 1h18v18H1z" stroke="#aaa" strokeDasharray="4 2" />}<path d="M12 12l7 7" stroke="#333" strokeWidth="2.800" /><circle cx="8" cy="7.500" r="6.500" fill="#e9f5f3" stroke="#8a9699" strokeWidth="1.500" />{!dashed && <path d="M16 3h4M18 1v4M16 7h4" stroke="#444" />}</Svg>
);

export default function App() {
  return (
    <Screen>
      <GlobalStyle />
      <TitleBar>
        <TitleLabel><FusionLogo />final v6* (MANASA M) - Autodesk Fusion (Education License)</TitleLabel>
        <WindowButtons>
          <Svg w={12}><path d="M0 5.500h12" stroke="#111" strokeWidth="1.200" /></Svg>
          <Svg w={12}><rect x=".6" y="3" width="8.500" height="8.500" rx="1.500" stroke="#111" strokeWidth="1.200" /><path d="M3 1h6q2.500 0 2.500 2.500V9" stroke="#111" strokeWidth="1.200" /></Svg>
          <Svg w={13} vb="0 0 12 12"><path d="M.5.5l11 11M11.500.5l-11 11" stroke="#111" strokeWidth="1.200" /></Svg>
        </WindowButtons>
      </TitleBar>

      <TabStrip>
        <QuickTools>
          <QuickItem $after={24}><Svg w={18}><path d="M0 0h5v5H0zM6.500 0h5v5h-5zM13 0h5v5h-5zM0 6.500h5v5H0zM6.500 6.500h5v5h-5zM13 6.500h5v5h-5zM0 13h5v5H0zM6.500 13h5v5h-5zM13 13h5v5h-5z" fill="#666" /></Svg></QuickItem>
          <QuickItem $after={24}><Svg w={17} h={20}><path d="M0 0h11v6h6v14H0z" fill="#666" /><path d="M12 0l5 5h-5z" fill="#666" /></Svg><Caret w={8} c="#666" /></QuickItem>
          <QuickItem $after={25}><Svg w={17} h={18}><path d="M0 0h15l2 2v16H0z" fill="#666" /><path d="M4 0h9v7H4zM3 10h11v8H3z" fill="#cbcbcb" /><path d="M9 1h2v4H9zM5 12h7v6H5z" fill="#666" /></Svg></QuickItem>
          <QuickItem $after={15}><Svg w={17}><path d="M7 1L1 6.500 7 12M2 6.500h7q6 0 6 9" stroke="#666" strokeWidth="2.600" /></Svg><Caret w={9} c="#666" /></QuickItem>
          <QuickItem $after={0} $dim><Svg w={17}><path d="M10 1l6 5.500-6 5.500M15 6.500H8q-6 0-6 9" stroke="#666" strokeWidth="2.600" /></Svg><Caret w={9} c="#666" /></QuickItem>
        </QuickTools>
        <HomeTab><Svg w={18}><path d="M9 0l4 4V2h2v4l3 3-1 1.500-2-2V18h-4v-5H7v5H3V8.500l-2 2L0 9z" fill="#7c7c7c" /></Svg></HomeTab>
        {["final v6*", "final v1", "final v1(1)", "forge sphere v1*"].map((n, i) => (
          <DocTab key={n} $active={i === 0}><DocName><DocCube />{n}</DocName><Close /></DocTab>
        ))}
        <NewTab><Svg w={17}><path d="M8.500 0v17M0 8.500h17" stroke="#777" strokeWidth="3.600" /></Svg></NewTab>
        <AccountTools>
          <Svg w={20}><circle cx="10" cy="10" r="10" fill="#666" /><path d="M7 20l1-7-4-4V5l5 4h2L8 4l2-1 4 5-2-5h2l2 6v5l-3 3v3z" fill="#cbcbcb" /><path d="M10 10l3-3" stroke="#666" /></Svg>
          <Svg w={20}><circle cx="10" cy="10" r="9.300" stroke="#666" strokeWidth="1.300" /><circle cx="10" cy="10" r="7.600" fill="#666" /><path d="M10 5v5h5" stroke="#ddd" strokeWidth="1.600" /></Svg>
          <Svg w={20}><path d="M1 16l3-4V8q1-4 4-5V0h2v3q4 1 4 5v4l3 4zM7 18h4q-1 3-4 0z" fill="#666" /><circle cx="14.500" cy="4.500" r="4.200" fill="#0a95dc" /></Svg>
          <Svg w={20}><circle cx="10" cy="10" r="10" fill="#666" /><text x="10" y="15.500" {...t} fontSize="16" fill="#eee">?</text></Svg>
          <Avatar>MM</Avatar>
        </AccountTools>
      </TabStrip>

      <Ribbon>
        <Workspace>DESIGN <Caret w={8} /></Workspace>
        <RibbonBody>
          <RibbonTabs>
            {ribbonTabs.map(([n, w, after], i) => <RibbonTab key={n} $w={w} $after={after} $active={i === 0}>{n}</RibbonTab>)}
          </RibbonTabs>
          <Groups>
            {groups.map(([name, w, icons, nudge]) => (
              <Group key={name} $w={w}>
                <GroupIcons>{icons.map(i => <React.Fragment key={i}>{ribbonIcons[i]}</React.Fragment>)}</GroupIcons>
                <GroupLabel $nudge={nudge}>{name}<Caret /></GroupLabel>
              </Group>
            ))}
            <Group $w={99} $last>
              <GroupIcons><SelectTile><R><path d="M1 1h34v27H1z" stroke="#3ed59b" strokeWidth="1.500" strokeDasharray="5 2.500" /><path d="M26 18v19l4-4 3 7 4-2-3-6h6z" fill="#fff" /></R></SelectTile></GroupIcons>
              <GroupLabel>SELECT<Caret /></GroupLabel>
            </Group>
          </Groups>
        </RibbonBody>
      </Ribbon>

      <Viewport>
        <Markers width="420" height="783">{markers.map(([x, y]) => <JointMarker key={`${x}-${y}`} x={x} y={y} />)}</Markers>
        <Sidebar>
          <PanelHead>
            <HeadIcon><Svg w={12} h={9}><path d="M6 0v9L0 4.500zM12 0v9L6 4.500z" fill="#333" /></Svg></HeadIcon>
            <HeadText>BROWSER</HeadText>
            <Svg w={12}><circle cx="6" cy="6" r="6" fill="#303030" /><path d="M3 6h6" stroke="#eee" strokeWidth="1.800" /></Svg>
          </PanelHead>
          <Tree>
            <TreeRow $root>
              <Arrow $w={22}><Svg w={10} h={10}><path d="M9 1v8H1z" fill="#666" stroke="#222" strokeWidth="1.500" /></Svg></Arrow>
              <RowBody $w={165}>
                <Eye />
                <RootName><RootIcon><Assembly /></RootIcon><RootText>final v6</RootText></RootName>
                <Svg w={17}><circle cx="8.500" cy="8.500" r="7.800" fill="#dfe3ec" stroke="#6b717b" strokeWidth="1.200" /><circle cx="8.500" cy="8.500" r="3.500" fill="#2b3036" /></Svg>
              </RowBody>
            </TreeRow>
            {rows.map(([k, l, w]) => <Row key={l} kind={k} label={l} w={w} />)}
          </Tree>
          <PanelHead $flatTop>
            <HeadIcon />
            <HeadText>COMMENTS</HeadText>
            <Svg w={12}><circle cx="6" cy="6" r="6" fill="#303030" /><path d="M3 6h6M6 3v6" stroke="#eee" strokeWidth="1.500" /></Svg>
          </PanelHead>
        </Sidebar>

        <Model width="310" height="340" viewBox="0 0 930 1020">
          <defs>
            <Grad id="beige" a="#a29988" b="#a39c8b" /><Grad id="umber" a="#6c685a" b="#686153" /><Grad id="tan" a="#9b9890" b="#989180" y2={1} x2={0} />
            <Grad id="leftLow" a="#87887f" b="#93948b" /><Grad id="rightUp" a="#7f827c" b="#8a8d88" /><Grad id="mid" a="#797973" b="#82827b" />
            <Grad id="rightHex" a="#7c7e78" b="#858780" /><Grad id="slate" a="#5c5d57" b="#62615a" /><Grad id="pale" a="#b6bab4" b="#9ea29b" x2={0} /><Grad id="lowRight" a="#74736c" b="#88837a" />
          </defs>
          <path d="M363 53h96v38h-19V72h-19v19h-19V72h-19v19h-20z" fill="#e67f7f" stroke="#d2a9a9" strokeWidth="3" />
          <polygon points="235,218 556,150 700,222 815,470 800,680 690,800 494,945 270,900 150,715 120,460" fill="#7b776d" />
          {faces.map(([p, f]) => <polygon key={p} points={p} fill={f} stroke={f} strokeWidth="1.500" />)}
          <g fill="none" strokeWidth="4" strokeLinejoin="round">
            <path d="M225 216L322 184 480 150 556 147" stroke="#6e7069" />
            <path d="M245 212L302 214 463 180" stroke="#c0bfb6" strokeWidth="3" />
            <path d="M482 222L517 283M384 376L272 344 165 460M213 425L262 372 272 348" stroke="#4e4b44" />
            <path d="M463 180L528 284" stroke="#8e8777" />
            <path d="M665 355L756 328M668 522L768 586M424 538L335 637M403 526L550 598" stroke="#4c4b45" />
            <path d="M205 617L147 720" stroke="#45443f" strokeWidth="6" />
            <path d="M205 615L325 637M335 640L392 728" stroke="#4c4c46" />
            <path d="M340 640L426 773 382 888" stroke="#85857c" strokeWidth="2.500" />
            <path d="M426 772L582 723 697 783 797 676" stroke="#a19a8c" strokeWidth="4.500" />
            <path d="M697 783L655 895M382 888L494 951M238 866L382 888" stroke="#8c8679" strokeWidth="2.500" />
            <path d="M768 586L820 470" stroke="#a39584" strokeWidth="6" />
            <path d="M756 328L824 470" stroke="#616760" />
            <path d="M578 580V722M386 364L403 526M526 284L663 352 680 514M180 530L205 612" stroke="#908e85" strokeWidth="1.200" />
            <path d="M128 352L225 218M108 465L106 530" stroke="#7c7c72" strokeWidth="3" />
            <path d="M860 602L838 725 745 856" stroke="#34302b" strokeWidth="5" />
            <path d="M751 737L770 790" stroke="#6d6b64" strokeWidth="1.500" />
          </g>
          <path d="M213 427L240 382 268 354 258 378z" fill="#55514a" />
          <path d="M787 570L797 676 760 706z" fill="#868782" />
          <path d="M430 465L443 517 430 520z" fill="#918a7e" /><path d="M434 520l8-4-3 8z" fill="#c3c9c4" />
          <path d="M740 495L790 540 778 565z" fill="#7d807a" />
        </Model>

        <ViewCube width="110" height="100" viewBox="1800 190 110 100">
          <defs>
            <radialGradient id="sh"><stop stopColor="#777" stopOpacity=".65" /><stop offset="1" stopColor="#999" stopOpacity="0" /></radialGradient>
            <Grad id="cubeF" a="#ededed" b="#dcdcdc" x2={0} />
          </defs>
          <ellipse cx="1857" cy="267" rx="46" ry="7" fill="url(#sh)" />
          <path d="M1824 215L1852 212V267L1824 262zM1852 212L1890 214V262L1852 267z" fill="url(#cubeF)" stroke="#878787" strokeWidth="1.200" strokeDasharray="8 3" />
          <path d="M1846 223h13v33h-13z" fill="#d0d3d8" opacity=".6" />
          <path d="M1852.500 213v53" stroke="#777" strokeDasharray="11 4" />
          <path d="M1823.500 208v54" stroke="#8582ff" strokeWidth="2" />
          <path d="M1824 262l35 7" stroke="#f47d7b" strokeWidth="2" />
          <text transform="translate(1837.500 244.500) scale(.55 1)" textAnchor="middle" fontFamily="Open Sans" fontSize="13" fill="#8f949b" stroke="#8f949b" strokeWidth=".3">FRONT</text>
          <text transform="translate(1872.500 244.500) scale(.68 1)" textAnchor="middle" fontFamily="Open Sans" fontSize="13" fill="#8f949b" stroke="#8f949b" strokeWidth=".3">RIGHT</text>
          <text x="1823" y="206" textAnchor="middle" fontFamily="Liberation Sans" fontSize="14.500" fill="#7f7bff" stroke="#7f7bff" strokeWidth=".4">Z</text>
          <text transform="translate(1863 276) scale(.75 1)" textAnchor="middle" fontFamily="Liberation Sans" fontSize="15" fill="#f27775" stroke="#f27775" strokeWidth=".3">X</text>
        </ViewCube>

        <NavBar>
          <NavItem $w={41} $gap={6}><Svg w={20}><ellipse cx="10" cy="11" rx="9" ry="4" stroke="#555" strokeWidth="1.500" /><path d="M8 19V5H6l4-5 4 5h-2v14z" fill="#e7e7e7" stroke="#777" /><path d="M3 11l4 2-4 3z" fill="#444" /></Svg><Caret /></NavItem>
          <NavItem $w={33}><Svg w={19}><path d="M2 7V3h2l1 2 8-4v4h4v3" fill="#777" /><path d="M1 7h17v11H1z" fill="#ececec" stroke="#999" /><path d="M4 10h11v5H4z" fill="#9aa2aa" stroke="#444" /></Svg></NavItem>
          <NavItem $w={32}><Svg w={20}><path d="M6 19q0-4-5-8-1-3 2-2l3 3L4 4q0-2 2-1l2 6V2q1-2 2 0l1 7 2-7q2-1 2 1l-1 8 3-5q2-1 2 1l-4 8-1 4z" fill="#fff" stroke="#555" strokeWidth="1.100" /></Svg></NavItem>
          <NavItem $w={32}><Search /></NavItem>
          <NavItem $w={42} $gap={6}><Search dashed /><Caret /></NavItem>
          <NavItem $w={38} $gap={2}><Svg w={20}><path d="M.5.5h19v14H.5z" fill="#ccc" stroke="#666" /><path d="M2.500 2.500h15v10h-15z" fill="#7ba9dc" stroke="#527cab" /><path d="M8 15h4v3h3v1.500H5V18h3z" fill="#888" /></Svg><Caret /></NavItem>
          <NavItem $w={39} $gap={4}><Svg w={19}><path d="M0 0h19v19H0z" fill="#e8eaed" /><path d="M1 0v19M5 0v19M9 0v19M13 0v19M18 0v19M0 1h19M0 5h19M0 9h19M0 13h19M0 18h19" stroke="#555" /><path d="M3 0v19M7 0v19M11 0v19M16 0v19M0 3h19M0 7h19M0 11h19M0 16h19" stroke="#aaa" strokeWidth=".6" /></Svg><Caret /></NavItem>
          <NavItem $w={30} $gap={3}><Svg w={19} h={16}><path d="M0 0h19v16H0z" fill="#46658e" /><path d="M1 1h8v6.500H1zM10 1h8v6.500h-8zM1 8.500h8V15H1zM10 8.500h8V15h-8z" fill="#88acd7" /></Svg><Caret /></NavItem>
        </NavBar>
        <Assistant width="21" height="21" viewBox="0 0 21 21"><path d="M10.500 0A10.300 10.300 0 0 1 21 10.500V21H10.500A10.500 10.500 0 0 1 10.500 0z" fill="#000" /><path d="M5 13l5-5M8 13l6-6M12 13l4-6M9 8h7M12 10h4M14 13h2" stroke="#fff" strokeWidth="1.100" /></Assistant>
      </Viewport>

      <Timeline>
        <Playback>
          <Svg w={15} h={16}><path d="M1.500 0v16" stroke="#555" strokeWidth="2" /><path d="M14.500 1v14L3.500 8z" fill="#555" /></Svg>
          <Svg w={16} h={16}><path d="M12 1v14L0 8z" fill="#555" /><path d="M14.500 5v6" stroke="#555" strokeWidth="2" /></Svg>
          <Svg w={16} h={19}><path d="M0 0l16 9.500L0 19z" fill="#555" /></Svg>
          <Svg w={16} h={16}><path d="M4 1v14l12-7z" fill="#555" /><path d="M1.500 5v6" stroke="#555" strokeWidth="2" /></Svg>
          <Svg w={15} h={16}><path d="M13.500 0v16" stroke="#555" strokeWidth="2" /><path d="M.5 1v14l11-7z" fill="#555" /></Svg>
        </Playback>
        <Track>
          {features.map((f, i) => (
            <Feature key={i}>
              <FeatureIcon $hot={f.includes("!")} $dim={f.includes("~")}>{featureIcons[f.replace(/[+!~]/g, "")]}</FeatureIcon>
              {f.includes("+") ? <Expand><Svg w={9}><path d="M4.500 0v9M0 4.500h9" stroke="#fff" strokeWidth="2" /></Svg></Expand> : <Tick />}
            </Feature>
          ))}
        </Track>
        <TimelineEnd><Gear w={20} /></TimelineEnd>
        <Playhead width="15" height="40"><path d="M0 0h15v7l-6 5v28H6V12L0 7z" fill="#5e5e5e" /></Playhead>
      </Timeline>

      <Taskbar>
        <Weather>
          <Svg w={38} h={36}>
            <path d="M4 24q9 3 14-1 4-4 4-10 9 3 7 13-3 9-13 9-8-1-12-11z" fill="#f39a22" />
            <path d="M6 19q-5-1-4-5 1-4 5-3 3-5 8-2 4 3 3 9z" fill="#a6c5f7" stroke="#6f99de" />
            <path d="M18 34q-4-1-3-5 1-3 4-2 2-5 7-4 3 1 4 5 4 1 2 6z" fill="#b2cdfa" stroke="#6f99de" />
            <circle cx="26" cy="11" r="10" fill="#c42b1c" /><text x="26" y="16" textAnchor="middle" fontFamily="Open Sans" fontSize="13" fill="#fff">2</text>
          </Svg>
        </Weather>
        <AppIcons>
          {apps.map((a, i) => <AppSlot key={i}><AppTile $active={a.active}>{a.el}{a.run && <Running $active={a.active} />}</AppTile></AppSlot>)}
        </AppIcons>
        <Tray>
          <TrayItem $ml={0}><Svg w={14} h={9}><path d="M1 8l6-6 6 6" stroke="#222" strokeWidth="1.600" /></Svg></TrayItem>
          <TrayItem $ml={23}><Svg w={20}><path d="M5 16q-5-1-4-5 1-3 4-3 2-5 7-4 4 1 4 5 4 1 3 4-1 3-4 3z" fill="#bcc1c5" stroke="#222" strokeWidth="1.400" /><path d="M2 3l15 15" stroke="#222" strokeWidth="1.500" /></Svg></TrayItem>
          <TrayItem $ml={20}><Svg w={21} h={22}><path d="M1 9q2-7 9-7 5 0 8 4V1M18 6h-5M10 20q-5-1-8-6v5M2 14h5" stroke="#222" strokeWidth="1.400" /><circle cx="15" cy="16" r="5" fill="#fc9a13" /></Svg></TrayItem>
          <Language>ENG<br />IN</Language>
          <TrayItem $ml={21}><Svg w={20} h={16}><path d="M1 6q9-9 18 0M4 9q6-6 12 0M7 12q3-3 6 0" stroke="#222" strokeWidth="1.500" /><circle cx="10" cy="14" r="1.500" fill="#222" /></Svg></TrayItem>
          <TrayItem $ml={10}><Svg w={20} h={16}><path d="M1 5.500h3L8.500 1v14L4 10.500H1z" stroke="#222" strokeWidth="1.300" /><path d="M11 5q2 3 0 6" stroke="#222" strokeWidth="1.300" /><path d="M14 3q4 5 0 10M16.500 1q5 7 0 14" stroke="#9aa2aa" strokeWidth="1.300" /></Svg></TrayItem>
          <TrayItem $ml={10}><Svg w={20} h={13}><rect x=".8" y=".8" width="16" height="11" rx="2.500" stroke="#222" strokeWidth="1.400" /><rect x="3" y="3" width="10" height="6.700" rx="1" fill="#222" /><path d="M18 4v5h1.500V4z" fill="#222" /></Svg></TrayItem>
          <Clock>18:52<br />02-03-2025</Clock>
        </Tray>
      </Taskbar>
    </Screen>
  );
}
